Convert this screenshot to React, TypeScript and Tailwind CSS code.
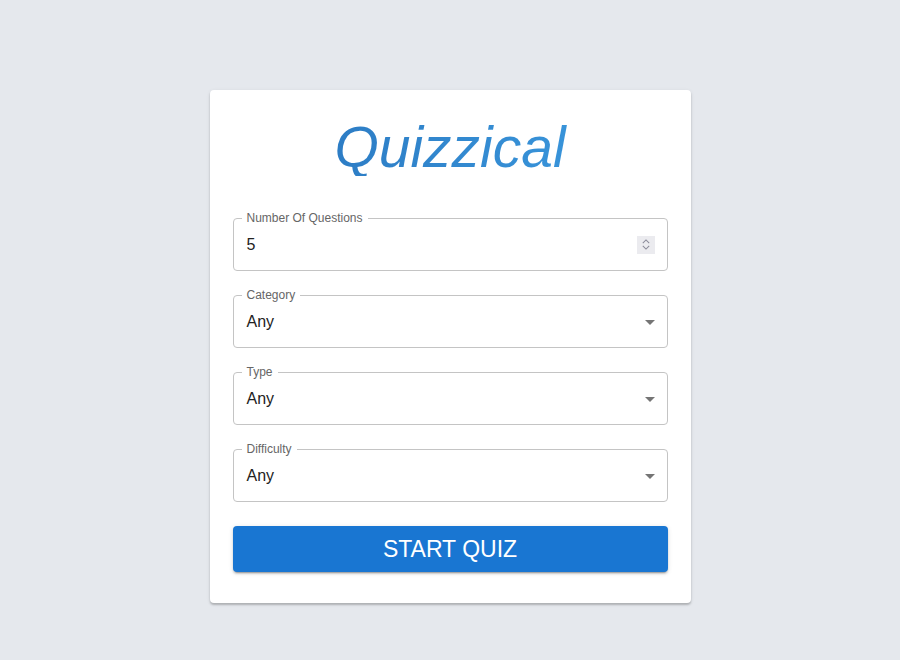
import { useState } from "react";

const fieldFont = { fontFamily: '"Liberation Sans", Arial, sans-serif' };

const DropArrow = () => (
    <svg viewBox="0 0 24 24" className="w-6 h-6 fill-[rgba(0,0,0,0.54)]">
        <path d="M7 10l5 5 5-5z" />
    </svg>
);

const Spinner = () => (
    <div className="w-[18px] h-[18px] bg-[#ebebef] flex flex-col items-center justify-center gap-[1px]">
        <svg viewBox="0 0 10 6" className="w-[8px] h-[5px] stroke-[#8a8a99] fill-none" strokeWidth="1.3">
            <path d="M1 5l4-4 4 4" />
        </svg>
        <svg viewBox="0 0 10 6" className="w-[8px] h-[5px] stroke-[#8a8a99] fill-none" strokeWidth="1.3">
            <path d="M1 1l4 4 4-4" />
        </svg>
    </div>
);

interface FieldProps {
    label: string;
    value: string;
    kind: "number" | "select";
}

const Field = ({ label, value, kind }: FieldProps) => (
    <div className="relative h-[53px] border border-[#c4c4c4] rounded flex items-center pl-[13px] pr-[5px]">
        <span className="absolute -top-[8px] left-[8px] bg-white px-[5px] text-[12px] leading-[14px] text-[#666]">
            {label}
        </span>
        <span className="flex-1 text-[16px] text-[#222]">{value}</span>
        {kind === "number" ? (
            <div className="mr-[7px]">
                <Spinner />
            </div>
        ) : (
            <DropArrow />
        )}
    </div>
);

export default function App() {
    const [fields] = useState([
        { label: "Number Of Questions", value: "5", kind: "number" as const },
        { label: "Category", value: "Any", kind: "select" as const },
        { label: "Type", value: "Any", kind: "select" as const },
        { label: "Difficulty", value: "Any", kind: "select" as const },
    ]);

    return (
        <div className="min-h-[660px] bg-[#e5e8ed] pt-[90px]" style={fieldFont}>
            <div className="w-[481px] mx-auto bg-white rounded shadow-[0_2px_2px_rgba(0,0,0,0.2),0_1px_4px_rgba(0,0,0,0.08)] px-[23px] pt-[29px] pb-[31px]">
                <h1 className="text-center italic text-[57px] leading-none bg-gradient-to-r from-[#2873bc] to-[#3d9de2] bg-clip-text text-transparent">
                    Quizzical
                </h1>
                <div className="mt-[42px] flex flex-col gap-[24px]">
                    {fields.map((f) => (
                        <Field key={f.label} label={f.label} value={f.value} kind={f.kind} />
                    ))}
                </div>
                <button
                    type="button"
                    className="mt-[24px] w-full h-[46px] rounded bg-[#1976d2] text-white text-[23px] uppercase shadow-[0_3px_1px_-2px_rgba(0,0,0,0.2),0_2px_2px_rgba(0,0,0,0.14),0_1px_5px_rgba(0,0,0,0.12)]"
                >
                    Start Quiz
                </button>
            </div>
        </div>
    );
}
